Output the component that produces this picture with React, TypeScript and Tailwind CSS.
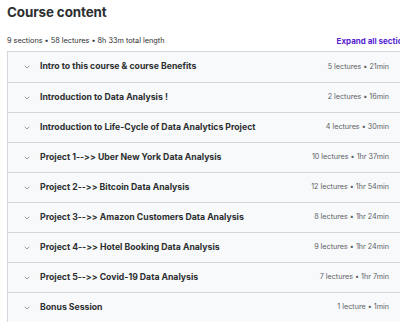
import React from "react";

// Section rows shown in the course curriculum
interface ISection {
  title: string;
  meta: string;
}

const sections: ISection[] = [
  { title: "Intro to this course & course Benefits", meta: "5 lectures • 21min" },
  { title: "Introduction to Data Analysis !", meta: "2 lectures • 16min" },
  { title: "Introduction to Life-Cycle of Data Analytics Project", meta: "4 lectures • 30min" },
  { title: "Project 1-->> Uber New York Data Analysis", meta: "10 lectures • 1hr 37min" },
  { title: "Project 2-->> Bitcoin Data Analysis", meta: "12 lectures • 1hr 54min" },
  { title: "Project 3-->> Amazon Customers Data Analysis", meta: "8 lectures • 1hr 24min" },
  { title: "Project 4-->> Hotel Booking Data Analysis", meta: "9 lectures • 1hr 24min" },
  { title: "Project 5-->> Covid-19 Data Analysis", meta: "7 lectures • 1hr 7min" },
  { title: "Bonus Session", meta: "1 lecture • 1min" },
];

const Chevron: React.FC = () => (
  <svg width="6" height="4" viewBox="0 0 6 4" className="shrink-0">
    <path d="M0.7 0.8 L3 3 L5.3 0.8" fill="none" stroke="#8a8f93" strokeWidth="0.9" />
  </svg>
);

const App: React.FC = () => {
  return (
    <div
      className="w-[400px] h-[322px] overflow-hidden bg-white text-[#2d2f31] [font-variant-ligatures:none] [font-feature-settings:'calt'_0,'liga'_0]"
      style={{ fontFamily: "Inter, 'Noto Sans', sans-serif" }}
    >
      <div className="pl-[7px] w-[412px]">
        {/* Header */}
        <h2 className="pt-[3px] text-[13.4px] leading-[18px] font-bold tracking-[-0.1px]">
          Course content
        </h2>
        <div className="mt-[15px] flex items-center justify-between h-[10px]">
          <span className="text-[7.3px] text-[#2d2f31]">
            9 sections • 58 lectures • 8h 33m total length
          </span>
          <span className="text-[8px] font-bold text-[#5624d0] whitespace-nowrap">
            Expand all sections
          </span>
        </div>

        {/* Section list */}
        <div className="mt-[5px] border border-[#d1d7dc] w-[403px]">
          {sections.map((s, i) => (
            <div
              key={i}
              className={`h-[30px] flex items-center bg-[#f7f9fa] pl-[16px] pr-[20px] ${
                i > 0 ? "border-t border-[#d1d7dc]" : ""
              }`}
            >
              <Chevron />
              <span className="ml-[10px] text-[8.7px] font-bold whitespace-nowrap">{s.title}</span>
              <span className="ml-auto text-[7.2px] text-[#5d6165] whitespace-nowrap">{s.meta}</span>
            </div>
          ))}
        </div>
      </div>
    </div>
  );
};

export default App;
